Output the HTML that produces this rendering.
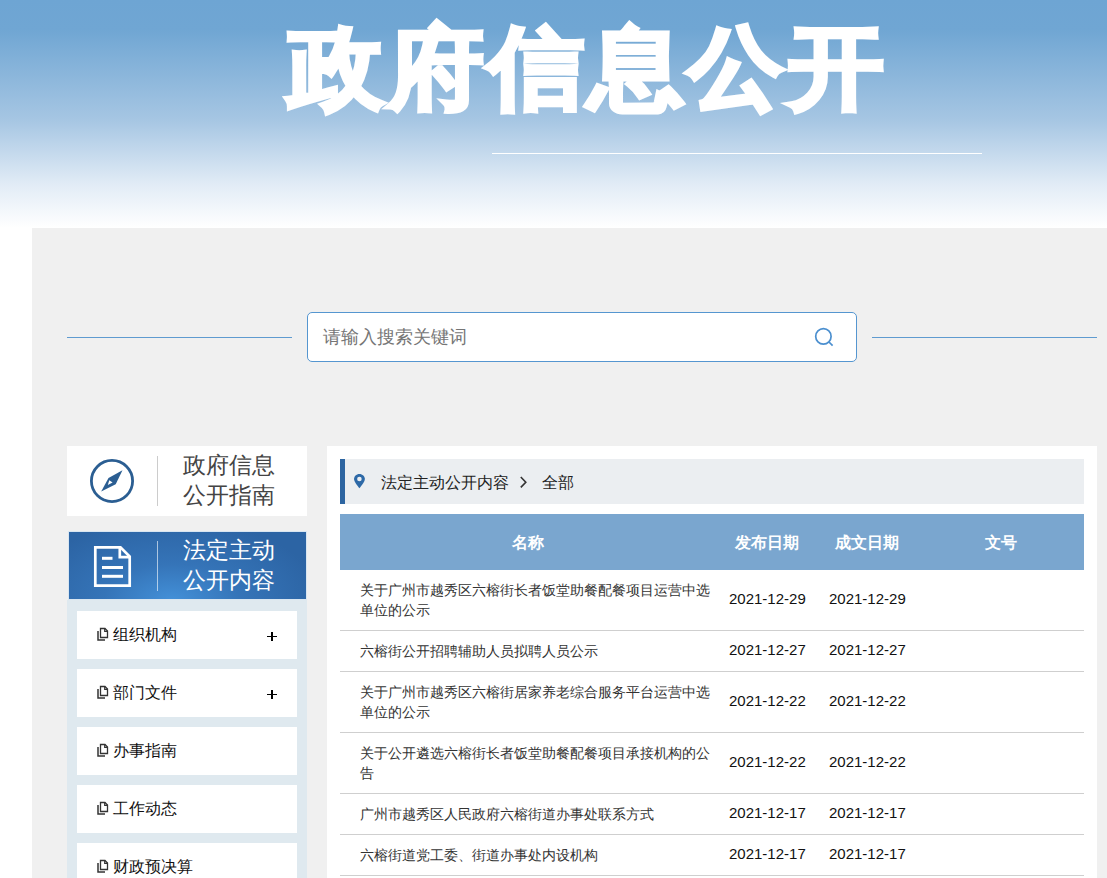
<!DOCTYPE html>
<html><head><meta charset="utf-8">
<style>
*{margin:0;padding:0;box-sizing:border-box}
html,body{width:1107px;height:878px;overflow:hidden;background:#fff;font-family:"Liberation Sans",sans-serif}
.abs{position:absolute}
#hdr{left:0;top:0;width:1107px;height:228px;background:linear-gradient(to bottom,#6ea5d3 0px,#70a6d3 30px,#a6c6e3 120px,#e2ecf6 185px,#ffffff 228px)}
#title{left:288px;top:2.5px;width:630px;height:130px;color:#fff;font-size:96px;font-weight:700;line-height:130px;letter-spacing:4px;white-space:nowrap;-webkit-text-stroke:4.4px #fff;transform:scaleY(0.94);transform-origin:0 65px}
#hline{left:492px;top:153px;width:490px;height:1px;background:#fff}
#main{left:32px;top:228px;width:1075px;height:650px;background:#f0f0f0}
.sline{top:337px;height:1px;background:#5f9bd0}
#search{left:307px;top:312px;width:550px;height:50px;border:1px solid #5596d0;border-radius:5px;background:#fff}
#ph{left:323px;top:322px;font-size:18px;line-height:30px;color:#757575}
#box1{left:67px;top:446px;width:240px;height:70px;background:#fff}
#box2{left:68px;top:531px;width:239px;height:69px;background:radial-gradient(ellipse 150px 80px at 103px 68px,#4390d8 0%,#3574b8 45%,#2c64a4 100%);border:1px solid #d9e6f1}
.div1{width:1px;background:#cccccc}
.sbt{font-size:23px;line-height:30px;white-space:nowrap}
#sub{left:67px;top:600px;width:240px;height:300px;background:#dfe9ef}
.item{left:77px;width:220px;height:48px;background:#fff}
.itxt{font-size:16px;line-height:20px;color:#111;white-space:nowrap}
.plus{font-size:18px;font-weight:700;color:#000}
#panel{left:327px;top:446px;width:770px;height:432px;background:#fff}
#bc{left:340px;top:459px;width:744px;height:45px;background:#ebeef1;border-left:5px solid #2d65a1}
.bct{font-size:16px;line-height:20px;color:#222;white-space:nowrap}
#thead{left:340px;top:514px;width:744px;height:56px;background:#7aa6cf}
.th{color:#fff;font-size:16px;font-weight:700;line-height:57px;text-align:center;top:514px}
.row{left:340px;width:744px;border-bottom:1px solid #cfcfcf}
.nm{left:360px;width:356px;font-size:14px;line-height:20px;color:#333}
.dt{font-size:15px;line-height:20px;color:#111;white-space:nowrap;margin-top:-0.7px}
</style></head><body>
<div id="hdr" class="abs"></div>
<div id="title" class="abs">政府信息公开</div>
<div id="hline" class="abs"></div>
<div id="main" class="abs"></div>

<div class="abs sline" style="left:67px;width:225px"></div>
<div class="abs sline" style="left:872px;width:225px"></div>
<div id="search" class="abs"></div>
<div id="ph" class="abs">请输入搜索关键词</div>
<svg class="abs" style="left:812px;top:325px" width="26" height="26" viewBox="0 0 26 26"><circle cx="11.4" cy="11.4" r="7.7" fill="none" stroke="#4b8fcf" stroke-width="1.7"/><line x1="17" y1="17" x2="20.6" y2="20.6" stroke="#4b8fcf" stroke-width="1.7"/></svg>

<div id="box1" class="abs"></div>
<svg class="abs" style="left:88px;top:457px" width="48" height="48" viewBox="0 0 48 48"><circle cx="24" cy="24" r="20.6" fill="none" stroke="#2b5e92" stroke-width="2.8"/><path d="M34.5 13.3 L27.7 27.3 L13.2 34.6 L20.5 21 Z" fill="#2b5e92"/><path d="M21.3 23.2 L24.6 25.6 L19.8 28 Z" fill="#fff"/></svg>
<div class="abs div1" style="left:157px;top:456px;height:50px"></div>
<div class="abs sbt" style="left:183px;top:450px;color:#444">政府信息<br>公开指南</div>

<div id="box2" class="abs"></div>
<svg class="abs" style="left:92px;top:544px" width="42" height="46" viewBox="0 0 42 46"><path d="M3.3 3.3 H28.5 L37.7 12.5 V41.7 H3.3 Z" fill="none" stroke="#fff" stroke-width="2.7"/><path d="M27.8 3.3 V13.2 H37.7" fill="none" stroke="#fff" stroke-width="2.7"/><rect x="10" y="12.8" width="10.5" height="3" fill="#fff"/><rect x="10" y="22" width="21" height="3" fill="#fff"/><rect x="10" y="30.8" width="21" height="3" fill="#fff"/></svg>
<div class="abs div1" style="left:157px;top:541px;height:50px;background:rgba(255,255,255,0.6)"></div>
<div class="abs sbt" style="left:183px;top:535px;color:#fff">法定主动<br>公开内容</div>

<div id="sub" class="abs"></div>
<div class="abs item" style="top:611px"></div>
<div class="abs item" style="top:669px"></div>
<div class="abs item" style="top:727px"></div>
<div class="abs item" style="top:785px"></div>
<div class="abs item" style="top:843px"></div>

<div id="panel" class="abs"></div>
<div id="bc" class="abs"></div>
<svg class="abs" style="left:352px;top:473px" width="14" height="17" viewBox="0 0 14 17"><path d="M7.4 0.9 C4.3 0.9 2 3.2 2 6.1 C2 9.2 7.4 15.3 7.4 15.3 C7.4 15.3 12.9 9.2 12.9 6.1 C12.9 3.2 10.5 0.9 7.4 0.9 Z" fill="#2d69a7"/><circle cx="7.4" cy="6" r="2.3" fill="#ebeef1"/></svg>
<div class="abs bct" style="left:381px;top:473px">法定主动公开内容</div>
<svg class="abs" style="left:517px;top:473.5px" width="12" height="16" viewBox="0 0 12 16"><path d="M3.8 3 L8.8 8.2 L3.8 13.4" fill="none" stroke="#333" stroke-width="1.6"/></svg>
<div class="abs bct" style="left:542px;top:473px">全部</div>

<div id="thead" class="abs"></div>
<div class="abs th" style="left:340px;width:376px">名称</div>
<div class="abs th" style="left:716px;width:101px">发布日期</div>
<div class="abs th" style="left:817px;width:100px">成文日期</div>
<div class="abs th" style="left:917px;width:167px">文号</div>
<svg class="abs" style="left:96px;top:627px" width="13" height="15" viewBox="0 0 13 15"><path d="M4.5 1.5 H9 L11.5 4 V10.5 H4.5 Z" fill="none" stroke="#333" stroke-width="1.3"/><path d="M8.7 1.5 V4.3 H11.5" fill="none" stroke="#333" stroke-width="1.2"/><path d="M2 4 V13 H9" fill="none" stroke="#333" stroke-width="1.5"/></svg><div class="abs itxt" style="left:113px;top:625px">组织机构</div>
<div class="abs" style="left:267px;top:635.7px;width:10px;height:1.4px;background:#000"></div><div class="abs" style="left:271.2px;top:632px;width:1.8px;height:9px;background:#000"></div>
<svg class="abs" style="left:96px;top:685px" width="13" height="15" viewBox="0 0 13 15"><path d="M4.5 1.5 H9 L11.5 4 V10.5 H4.5 Z" fill="none" stroke="#333" stroke-width="1.3"/><path d="M8.7 1.5 V4.3 H11.5" fill="none" stroke="#333" stroke-width="1.2"/><path d="M2 4 V13 H9" fill="none" stroke="#333" stroke-width="1.5"/></svg><div class="abs itxt" style="left:113px;top:683px">部门文件</div>
<div class="abs" style="left:267px;top:693.7px;width:10px;height:1.4px;background:#000"></div><div class="abs" style="left:271.2px;top:690px;width:1.8px;height:9px;background:#000"></div>
<svg class="abs" style="left:96px;top:743px" width="13" height="15" viewBox="0 0 13 15"><path d="M4.5 1.5 H9 L11.5 4 V10.5 H4.5 Z" fill="none" stroke="#333" stroke-width="1.3"/><path d="M8.7 1.5 V4.3 H11.5" fill="none" stroke="#333" stroke-width="1.2"/><path d="M2 4 V13 H9" fill="none" stroke="#333" stroke-width="1.5"/></svg><div class="abs itxt" style="left:113px;top:741px">办事指南</div>
<svg class="abs" style="left:96px;top:801px" width="13" height="15" viewBox="0 0 13 15"><path d="M4.5 1.5 H9 L11.5 4 V10.5 H4.5 Z" fill="none" stroke="#333" stroke-width="1.3"/><path d="M8.7 1.5 V4.3 H11.5" fill="none" stroke="#333" stroke-width="1.2"/><path d="M2 4 V13 H9" fill="none" stroke="#333" stroke-width="1.5"/></svg><div class="abs itxt" style="left:113px;top:799px">工作动态</div>
<svg class="abs" style="left:96px;top:859px" width="13" height="15" viewBox="0 0 13 15"><path d="M4.5 1.5 H9 L11.5 4 V10.5 H4.5 Z" fill="none" stroke="#333" stroke-width="1.3"/><path d="M8.7 1.5 V4.3 H11.5" fill="none" stroke="#333" stroke-width="1.2"/><path d="M2 4 V13 H9" fill="none" stroke="#333" stroke-width="1.5"/></svg><div class="abs itxt" style="left:113px;top:857px">财政预决算</div>
<div class="abs row" style="top:570px;height:61px"></div>
<div class="abs nm" style="top:580px">关于广州市越秀区六榕街长者饭堂助餐配餐项目运营中选单位的公示</div>
<div class="abs dt" style="left:729px;top:590px">2021-12-29</div>
<div class="abs dt" style="left:829px;top:590px">2021-12-29</div>
<div class="abs row" style="top:631px;height:41px"></div>
<div class="abs nm" style="top:641px">六榕街公开招聘辅助人员拟聘人员公示</div>
<div class="abs dt" style="left:729px;top:641px">2021-12-27</div>
<div class="abs dt" style="left:829px;top:641px">2021-12-27</div>
<div class="abs row" style="top:672px;height:61px"></div>
<div class="abs nm" style="top:682px">关于广州市越秀区六榕街居家养老综合服务平台运营中选单位的公示</div>
<div class="abs dt" style="left:729px;top:692px">2021-12-22</div>
<div class="abs dt" style="left:829px;top:692px">2021-12-22</div>
<div class="abs row" style="top:733px;height:61px"></div>
<div class="abs nm" style="top:743px">关于公开遴选六榕街长者饭堂助餐配餐项目承接机构的公告</div>
<div class="abs dt" style="left:729px;top:753px">2021-12-22</div>
<div class="abs dt" style="left:829px;top:753px">2021-12-22</div>
<div class="abs row" style="top:794px;height:41px"></div>
<div class="abs nm" style="top:804px">广州市越秀区人民政府六榕街道办事处联系方式</div>
<div class="abs dt" style="left:729px;top:804px">2021-12-17</div>
<div class="abs dt" style="left:829px;top:804px">2021-12-17</div>
<div class="abs row" style="top:835px;height:41px"></div>
<div class="abs nm" style="top:845px">六榕街道党工委、街道办事处内设机构</div>
<div class="abs dt" style="left:729px;top:845px">2021-12-17</div>
<div class="abs dt" style="left:829px;top:845px">2021-12-17</div>
</body></html>
